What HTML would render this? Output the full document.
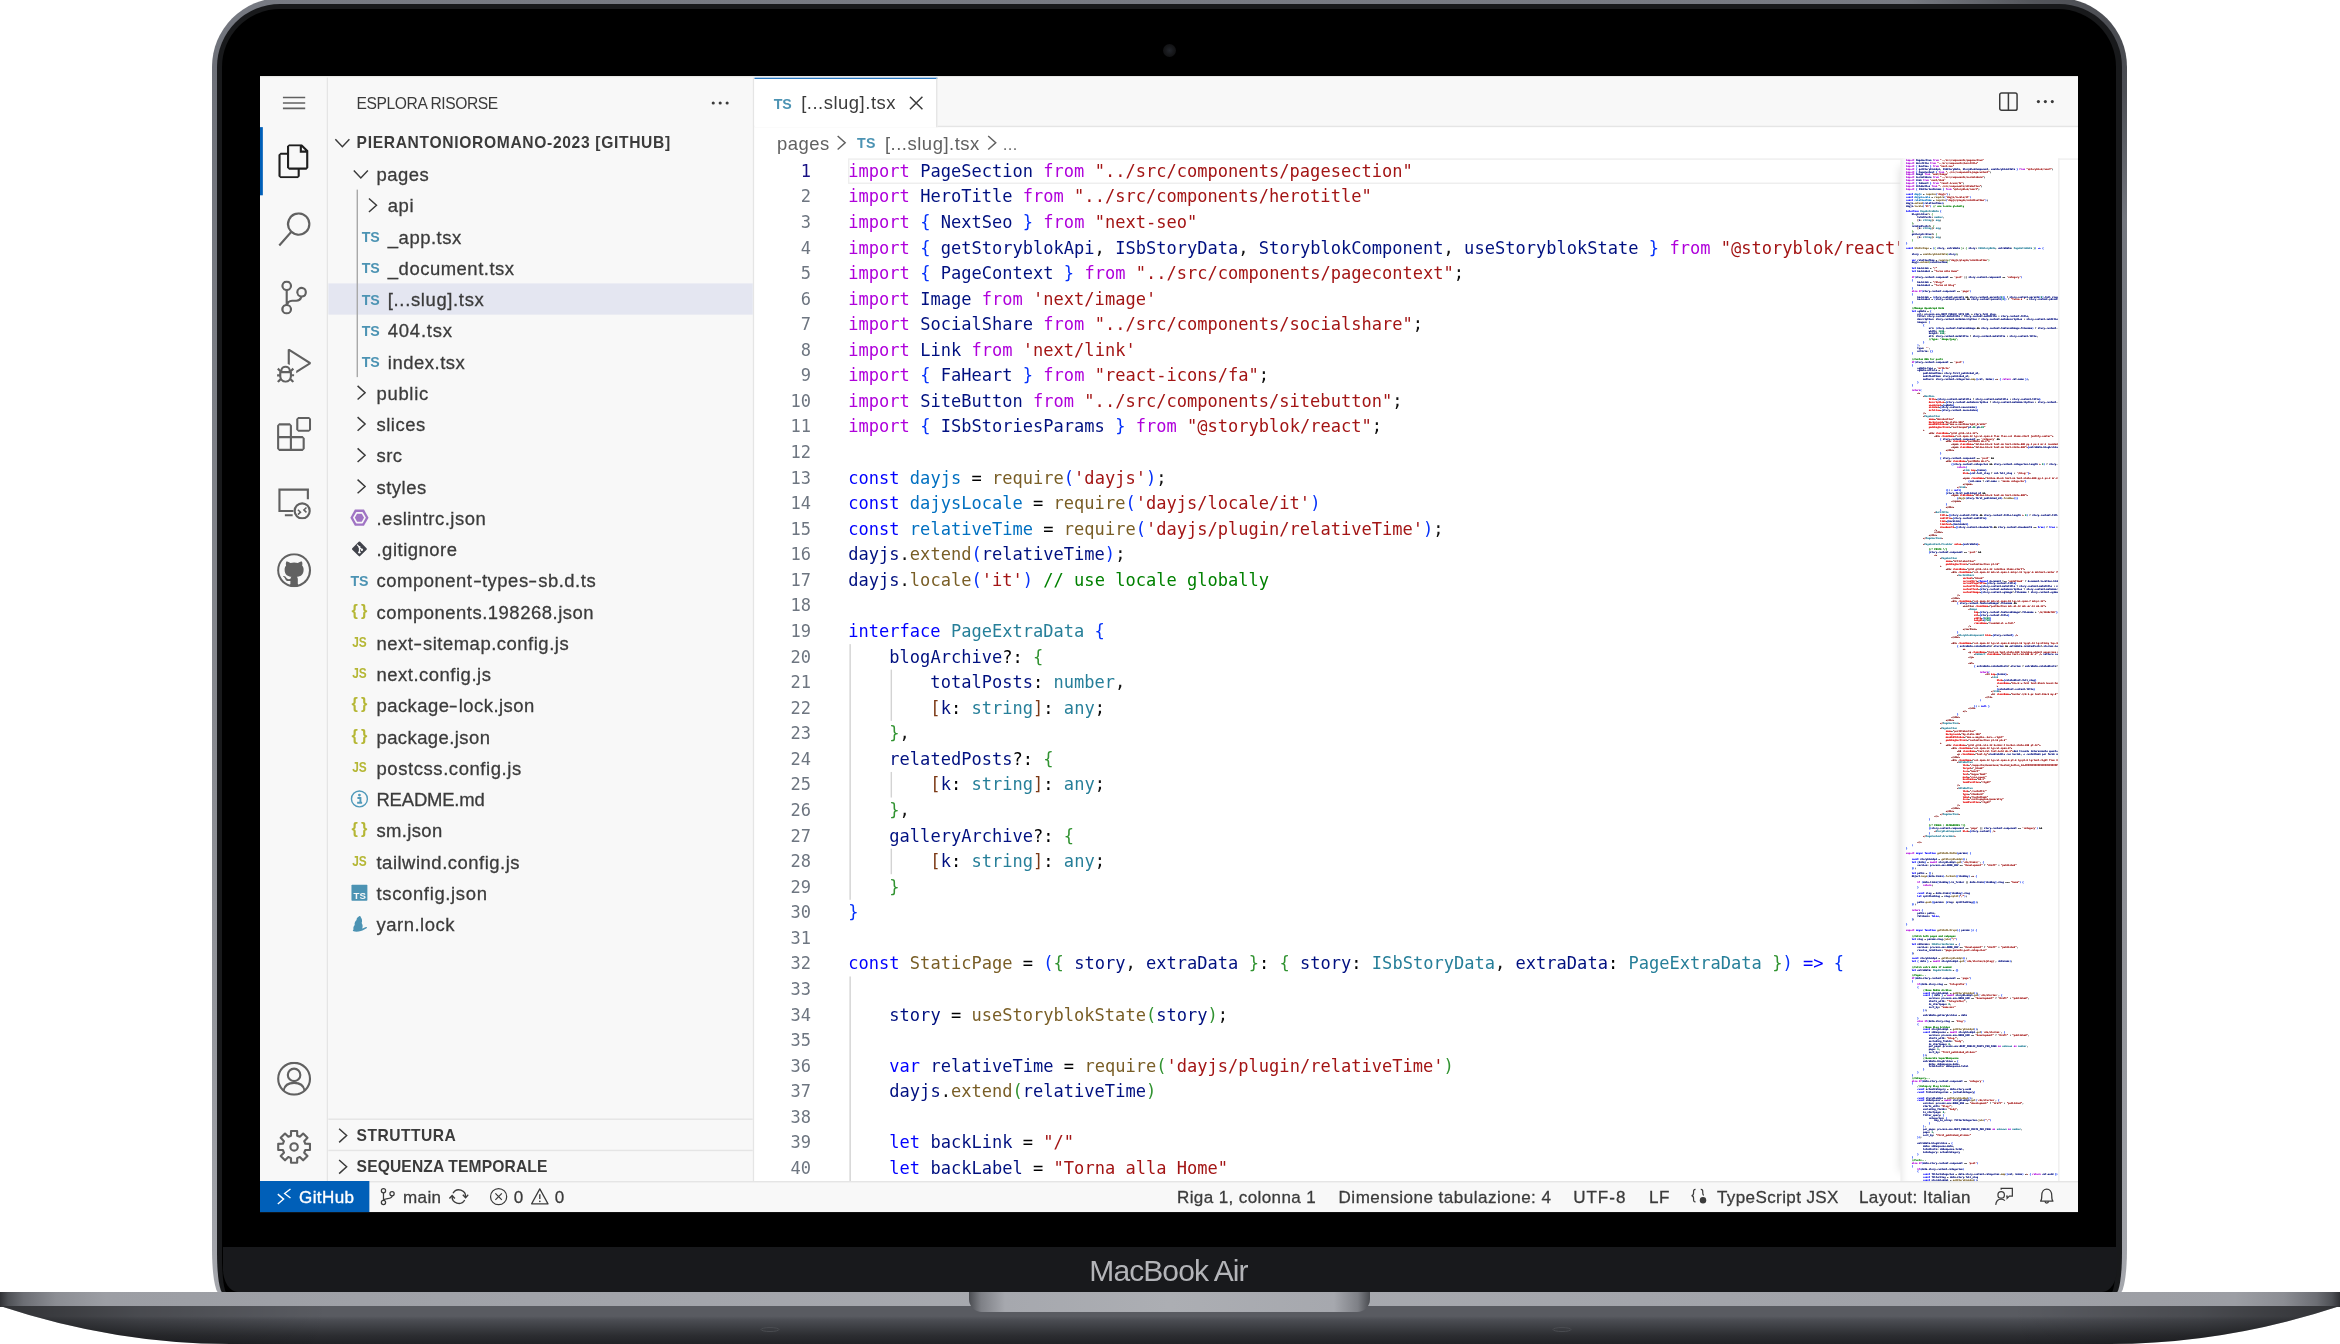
<!DOCTYPE html>
<html lang="it"><head><meta charset="utf-8"><title>[...slug].tsx — pierantonioromano-2023 [GitHub]</title>
<style>
html,body{margin:0;padding:0;background:#fff;}
body{width:2340px;height:1344px;overflow:hidden;position:relative;font-family:"Liberation Sans",sans-serif;}
.abs{position:absolute}
/* ---------- laptop ---------- */
#lid{position:absolute;left:211.7px;top:-2px;width:1915.4px;height:1295px;border-radius:69px 69px 7px 7px / 69px 69px 44px 44px;background:linear-gradient(225deg,rgba(0,0,0,.38) 0,rgba(0,0,0,.3) 3%,rgba(0,0,0,0) 7%),linear-gradient(180deg,#787b83 0%,#6d7078 5%,#7b7e85 30%,#86888e 55%,#95979d 80%,#a5a7ad 100%);}
#lid2{position:absolute;left:5.3px;top:5.5px;right:5.3px;bottom:0;border-radius:63px 63px 6px 6px / 63px 63px 40px 40px;background:#18191b;}
#lid3{position:absolute;left:5.5px;top:5px;right:5.5px;bottom:0;border-radius:58px 58px 5px 5px / 58px 58px 36px 36px;background:#000;}
#chin{position:absolute;left:223px;top:1247px;width:1894px;height:44.5px;background:#18191c;border-radius:0 0 15px 15px / 0 0 23px 23px;}
#mba{position:absolute;left:0;width:2337px;top:1253px;text-align:center;font-size:30px;line-height:36px;color:#b3b4b8;letter-spacing:-0.92px;will-change:transform;}
#cam{position:absolute;left:1162.5px;top:43.5px;width:13px;height:13px;border-radius:50%;background:radial-gradient(circle,#23262c 0,#17181b 45%,#0c0c0d 100%);}
#base{position:absolute;left:0;top:1292px;width:2340px;height:60px;}
#base .strip{position:absolute;left:0;top:0;width:2340px;height:15px;background:linear-gradient(90deg,#303135 0,#4f5156 .35%,#6c6e74 1%,#8b8d93 2.4%,#9c9ea4 4.5%,#a3a5ab 30%,#a9abb0 50%,#a3a5ab 70%,#9c9ea4 95.5%,#8b8d93 97.6%,#6c6e74 99%,#4f5156 99.65%,#303135 100%);}
#base .body{position:absolute;left:0;top:0;width:2340px;height:52px;}
#base .notch{position:absolute;left:969px;top:0;width:401px;height:19.5px;border-radius:0 0 13px 13px;background:linear-gradient(90deg,#4a4c51 0,#7e8086 3%,#a6a8ae 9%,#acaeb3 50%,#a6a8ae 91%,#7e8086 97%,#4a4c51 100%);}
/* ---------- vscode ---------- */
#vs{position:absolute;left:260px;top:76px;width:1280px;height:800px;transform:scale(1.420313);transform-origin:0 0;color:#3b3b3b;font-size:13px;overflow:hidden;will-change:transform;}
#scr{position:absolute;left:260px;top:76px;width:1818px;height:1136px;background:#e8e8e6}
#vs svg{display:block}
#wb{position:absolute;left:0;top:1px;width:1280px;height:777px;background:#f8f8f8}
.act{position:absolute;left:0;top:0;width:48px;height:777px;background:#f8f8f8;border-right:1px solid #e5e5e5;box-sizing:border-box;}
.act .it{position:absolute;left:0;width:48px;height:48px;}
.act .it svg{position:absolute;left:12px;top:12px;}
.act .it.on:before{content:"";position:absolute;left:0;top:0;width:2px;height:48px;background:#005fb8;}
.act .menu{position:absolute;left:0;top:0;width:48px;height:35px;}
.act .menu svg{position:absolute;left:16px;top:10.3px;}
.side{position:absolute;left:48px;top:0;width:300px;height:777px;background:#f8f8f8;border-right:1px solid #e5e5e5;box-sizing:border-box;overflow:hidden;}
.side .title{position:absolute;left:20px;top:0;height:35px;line-height:36px;font-size:11px;letter-spacing:-0.3px;color:#3b3b3b;white-space:pre;}
.side .dots{position:absolute;left:268px;top:10px;}
.side .ph{position:absolute;left:0;width:299px;height:22px;line-height:23px;font-size:11px;font-weight:700;color:#3b3b3b;white-space:pre;}
.side .ph .tw{position:absolute;left:2px;top:3px;}
.side .ph .lb{position:absolute;left:20px;top:0;}
.side .ph.bt{border-top:1px solid #e5e5e5;}
.rows{position:absolute;left:0;top:57px;width:299px;}
.row{position:relative;height:22px;line-height:22px;white-space:pre;}
.row.sel{background:#e4e6f1;}
.row .tw{position:absolute;top:3px;color:#3b3b3b}
.row .fi{position:absolute;top:3px;width:16px;height:16px;}
.row .lb{position:absolute;top:1.4px;letter-spacing:0.36px;color:#3b3b3b;-webkit-text-stroke:.2px #3b3b3b}
.ticon{display:block;font-weight:700;font-size:10px;line-height:16px;letter-spacing:-0.1px;text-align:center;width:16px;}
.hy{display:inline-block;transform:scaleX(1.45);margin:0 1px}
.ticon.ts{color:#4c93b3;line-height:17.2px}.ticon.js{color:#b5b735;transform:scaleX(.84)}.ticon.jsn{color:#b5b735;font-size:11.5px;font-weight:700;letter-spacing:0;line-height:14.4px}
.guide{position:absolute;left:20px;top:79px;width:1px;height:132px;background:#a9a9a9;}
.editor{position:absolute;left:348px;top:0;width:932px;height:777px;background:#fff;overflow:hidden;}
.tabs{position:absolute;left:0;top:0;width:932px;height:35px;background:#f8f8f8;border-bottom:1px solid #e5e5e5;box-sizing:border-box;}
.tab{position:absolute;left:0;top:0;width:129px;height:35px;background:#fff;border-top:1px solid #005fb8;border-right:1px solid #e5e5e5;box-sizing:border-box;}
.tab .fi{position:absolute;left:12px;top:9px;}
.tab .lb{position:absolute;left:33px;top:0;line-height:34px;letter-spacing:0.36px;white-space:pre;color:#3b3b3b}
.tab .x{position:absolute;left:106px;top:9px;}
.tabs .act1{position:absolute;left:875px;top:8.9px;}
.tabs .act2{position:absolute;left:900.8px;top:9.2px;}
.bc{position:absolute;left:0;top:35px;width:932px;height:22px;line-height:24px;color:#616161;white-space:pre;}
.bc span{position:absolute;top:0;letter-spacing:0.36px}
.bc .ch{top:3px;color:#616161}
.bc .fi{top:3px}
.code{position:absolute;left:0;top:57.3px;width:932px;height:720px;font-family:"DejaVu Sans Mono",monospace;font-size:12px;line-height:18px;}
.lns{position:absolute;left:0;top:0;width:40px;text-align:right;color:#6e7681;}
.ln.cur{color:#171184}
.cls{position:absolute;left:66.2px;top:0;width:740px;height:720px;overflow:hidden;color:#3b3b3b;}
.cl{height:18px;white-space:pre;}
.k{color:#AF00DB}.b{color:#0000FF}.v{color:#001080}.c{color:#0070C1}.f{color:#795E26}.t{color:#267F99}.s{color:#A31515}.m{color:#008000}.p{color:#111}.o{color:#000}.b1{color:#0431FA}.b2{color:#319331}.b3{color:#7B3814}.a{color:#E50000}.g{color:#800000}.n{color:#098658}
.curline{position:absolute;left:65.6px;top:-0.2px;width:760px;height:17.8px;border:1.6px solid #eeeeee;box-sizing:border-box;}
.ig{position:absolute;width:1px;background:#d3d3d3;}
.mm{position:absolute;left:806.5px;top:57px;width:111.7px;height:720px;overflow:hidden;background:#fff;box-shadow:-6px 0 6px -6px #ddd;}
.mm:before{content:"";position:absolute;left:0;top:0;width:6px;height:720px;box-shadow:inset 6px 0 6px -6px #ddd;}
.mm pre{position:absolute;left:4.4px;top:-0.2px;margin:0;font-family:"DejaVu Sans Mono",monospace;font-size:1.661px;line-height:2px;font-weight:700;opacity:.95;}
.mm pre i{font-style:normal;text-shadow:0 0 .4px currentColor;}
.sb{position:absolute;left:918px;top:57px;width:14px;height:720px;border-left:1px solid #efefef;border-top:1px solid #efefef;box-sizing:border-box;background:#fff}
.status{position:absolute;left:0;top:778px;width:1280px;height:22px;background:#f8f8f8;border-top:1px solid #e5e5e5;box-sizing:border-box;font-size:12px;line-height:21px;color:#3b3b3b;white-space:pre;}
.status span{position:absolute;top:0.4px;letter-spacing:0.27px;-webkit-text-stroke:.2px #3b3b3b}
.status .ic{top:2.5px}
.status .rem{left:0;top:-1px;width:77px;height:22px;background:#005fb8;}



.status .tx{transform:translateY(0.6px)}

</style></head>
<body>
<div id="lid"><div id="lid2"><div id="lid3"></div></div></div>
<div id="chin"></div>
<div id="cam"></div>
<div id="mba">MacBook Air</div>
<div id="base"><div class="strip"></div><svg class="body" width="2340" height="52" viewBox="0 0 2340 52"><defs><linearGradient id="bg1" x1="0" y1="0" x2="0" y2="1"><stop offset="0.27" stop-color="#595b61"/><stop offset="0.36" stop-color="#4c4e54"/><stop offset="0.55" stop-color="#3d3f44"/><stop offset="0.78" stop-color="#2c2d31"/><stop offset="1" stop-color="#212226"/></linearGradient><linearGradient id="bg2" x1="0" y1="0" x2="1" y2="0"><stop offset="0" stop-color="#000" stop-opacity=".45"/><stop offset="0.06" stop-color="#000" stop-opacity=".18"/><stop offset="0.14" stop-color="#000" stop-opacity="0"/><stop offset="0.86" stop-color="#000" stop-opacity="0"/><stop offset="0.94" stop-color="#000" stop-opacity=".18"/><stop offset="1" stop-color="#000" stop-opacity=".45"/></linearGradient></defs><path d="M0 14 Q115 52 230 52 L2110 52 Q2225 52 2340 14 Z" fill="url(#bg1)"/><path d="M0 14 Q115 52 230 52 L2110 52 Q2225 52 2340 14 Z" fill="url(#bg2)"/><ellipse cx="770" cy="37.5" rx="9" ry="2" fill="none" stroke="#4a4c51" stroke-width="1"/><ellipse cx="1562" cy="37.5" rx="9" ry="2" fill="none" stroke="#4a4c51" stroke-width="1"/></svg><div class="notch"></div></div>
<div id="scr"></div>
<div id="vs">
 <div id="wb">
 <div class="act">
  <div class="menu"><svg width="16" height="16" viewBox="0 0 16 16" ><path d="M0 4.2 H16 M0 8 H16 M0 11.8 H16" stroke="#616161" stroke-width="1.1"/></svg></div>
  <div class="it on" style="top:35px"><svg width="24" height="24" viewBox="0 0 24 24" ><path fill="#1f1f1f" d="M17.5 0h-9L7 1.5V6H2.5L1 7.5v15.07L2.5 24h12.07L16 22.57V18h4.7l1.3-1.43V4.5L17.5 0zm0 2.12l2.38 2.38H17.5V2.12zm-3 20.38h-12v-15H7v9.07L8.5 18h6v4.5zm6-6h-12v-15H16V6h4.5v10.5z"/></svg></div>
  <div class="it" style="top:83px"><svg width="24" height="24" viewBox="0 0 24 24" ><path fill="#616161" d="M15.25 0a8.25 8.25 0 0 0-6.18 13.72L1 22.88l1.12 1 8.05-9.12A8.251 8.251 0 1 0 15.25.01V0zm0 15a6.75 6.75 0 1 1 0-13.5 6.75 6.75 0 0 1 0 13.5z"/></svg></div>
  <div class="it" style="top:131px"><svg width="24" height="24" viewBox="0 0 24 24" ><path fill="#616161" d="M21.007 8.222A3.738 3.738 0 0 0 15.045 5.2a3.737 3.737 0 0 0 1.156 6.583 2.988 2.988 0 0 1-2.668 1.67h-2.99a4.456 4.456 0 0 0-2.989 1.165V7.4a3.737 3.737 0 1 0-1.494 0v9.117a3.776 3.776 0 1 0 1.816.099 2.99 2.99 0 0 1 2.668-1.667h2.99a4.484 4.484 0 0 0 4.223-3.039 3.736 3.736 0 0 0 3.25-3.687zM4.565 3.738a2.242 2.242 0 1 1 4.484 0 2.242 2.242 0 0 1-4.484 0zm4.484 16.441a2.242 2.242 0 1 1-4.484 0 2.242 2.242 0 0 1 4.484 0zm8.221-9.715a2.242 2.242 0 1 1 0-4.485 2.242 2.242 0 0 1 0 4.485z"/></svg></div>
  <div class="it" style="top:179px"><svg width="24" height="24" viewBox="0 0 24 24" ><path fill="#616161" d="M10.94 13.5l-1.32 1.32a3.73 3.73 0 0 0-7.24 0L1.06 13.5 0 14.56l1.72 1.72-.22.22V18H0v1.5h1.5v.08c.077.489.214.966.41 1.42L0 22.94 1.06 24l1.65-1.65A4.308 4.308 0 0 0 6 24a4.31 4.31 0 0 0 3.29-1.65L10.94 24 12 22.94 10.09 21c.198-.464.336-.951.41-1.45v-.1H12V18h-1.5v-1.5l-.22-.22L12 14.56l-1.06-1.06zM6 13.5a2.25 2.25 0 0 1 2.25 2.25h-4.5A2.25 2.25 0 0 1 6 13.5zm3 6a3.33 3.33 0 0 1-3 3 3.33 3.33 0 0 1-3-3v-2.25h6v2.25zm14.76-9.9v1.26L13.5 17.37V15.6l8.5-5.37L9 2v9.46a5.07 5.07 0 0 0-1.5-.72V.63L8.64 0l15.12 9.6z"/></svg></div>
  <div class="it" style="top:227px"><svg width="24" height="24" viewBox="0 0 24 24" ><path fill="#616161" d="M13.5 1.5L15 0h7.5L24 1.5V9l-1.5 1.5H15L13.5 9V1.5zm1.5 0V9h7.5V1.5H15zM0 15V6l1.5-1.5H9L10.5 6v7.5H18l1.5 1.5v7.5L18 24H1.5L0 22.5V15zm9-1.5V6H1.5v7.5H9zM9 15H1.5v7.5H9V15zm1.5 7.5H18V15h-7.5v7.5z"/></svg></div>
  <div class="it" style="top:275px"><svg width="24" height="24" viewBox="0 0 24 24" ><path d="M21.7 10 V3.2 H1.7 V18.3 H11.5 M5.5 21.3 H11" fill="none" stroke="#616161" stroke-width="1.5"/><circle cx="17.7" cy="18.2" r="5.3" fill="none" stroke="#616161" stroke-width="1.5"/><path d="M14.7 17.4 L16.5 19.1 L14.7 20.8 M20.7 15.8 L18.9 17.5 L20.7 19.2" fill="none" stroke="#616161" stroke-width="1.1"/></svg></div>
  <div class="it" style="top:323px"><svg width="24" height="24" viewBox="0 0 16 16" ><circle cx="8" cy="8" r="7.95" fill="#616161"/><g transform="translate(8 8) scale(0.875) translate(-8 -8)"><path fill="#f8f8f8" d="M8 0C3.58 0 0 3.58 0 8c0 3.54 2.29 6.53 5.47 7.59.4.07.55-.17.55-.38 0-.19-.01-.82-.01-1.49-2.01.37-2.53-.49-2.69-.94-.09-.23-.48-.94-.82-1.13-.28-.15-.68-.52-.01-.53.63-.01 1.08.58 1.23.82.72 1.21 1.87.87 2.33.66.07-.52.28-.87.51-1.07-1.78-.2-3.64-.89-3.64-3.95 0-.87.31-1.59.82-2.15-.08-.2-.36-1.02.08-2.12 0 0 .67-.21 2.2.82.64-.18 1.32-.27 2-.27.68 0 1.36.09 2 .27 1.53-1.04 2.2-.82 2.2-.82.44 1.1.16 1.92.08 2.12.51.56.82 1.27.82 2.15 0 3.07-1.87 3.75-3.65 3.95.29.25.54.73.54 1.48 0 1.07-.01 1.93-.01 2.2 0 .21.15.46.55.38A8.013 8.013 0 0 0 16 8c0-4.42-3.58-8-8-8z"/></g></svg></div>
  <div class="it" style="top:681px"><svg width="24" height="24" viewBox="0 0 24 24" ><circle cx="12" cy="12" r="11.2" fill="none" stroke="#616161" stroke-width="1.5"/><circle cx="12" cy="9.3" r="4.4" fill="none" stroke="#616161" stroke-width="1.5"/><path d="M4.6 20.2 C5.4 16.4 8.4 14.9 12 14.9 C15.6 14.9 18.6 16.4 19.4 20.2" fill="none" stroke="#616161" stroke-width="1.5"/></svg></div>
  <div class="it" style="top:729px"><svg width="24" height="24" viewBox="0 0 24 24" ><path d="M9.81 4.10 L9.85 0.81 L14.15 0.81 L14.19 4.10 L16.04 4.87 L18.39 2.56 L21.44 5.61 L19.13 7.96 L19.90 9.81 L23.19 9.85 L23.19 14.15 L19.90 14.19 L19.13 16.04 L21.44 18.39 L18.39 21.44 L16.04 19.13 L14.19 19.90 L14.15 23.19 L9.85 23.19 L9.81 19.90 L7.96 19.13 L5.61 21.44 L2.56 18.39 L4.87 16.04 L4.10 14.19 L0.81 14.15 L0.81 9.85 L4.10 9.81 L4.87 7.96 L2.56 5.61 L5.61 2.56 L7.96 4.87Z" fill="none" stroke="#616161" stroke-width="1.5" stroke-linejoin="round"/><circle cx="12" cy="12" r="2.6" fill="none" stroke="#616161" stroke-width="1.5"/></svg></div>
 </div>
 <div class="side">
  <div class="title">ESPLORA RISORSE</div>
  <div class="dots"><svg width="16" height="16" viewBox="0 0 16 16" ><circle cx="3.1" cy="8" r="1.1" fill="#3b3b3b"/><circle cx="8" cy="8" r="1.1" fill="#3b3b3b"/><circle cx="12.9" cy="8" r="1.1" fill="#3b3b3b"/></svg></div>
  <div class="ph" style="top:35px"><span class="tw"><svg width="16" height="16" viewBox="0 0 16 16" ><path d="M3.05 5.6 L8 10.8 L12.95 5.6" fill="none" stroke="currentColor" stroke-width="1.05"/></svg></span><span class="lb" style="letter-spacing:.46px">PIERANTONIOROMANO-2023 [GITHUB]</span></div>
  <div class="rows">
<div class="row"><span class="tw" style="left:15px"><svg width="16" height="16" viewBox="0 0 16 16" ><path d="M3.05 5.6 L8 10.8 L12.95 5.6" fill="none" stroke="currentColor" stroke-width="1.05"/></svg></span><span class="lb" style="left:34px">pages</span></div>
<div class="row"><span class="tw" style="left:23px"><svg width="16" height="16" viewBox="0 0 16 16" ><path d="M5.7 3.2 L11 8 L5.7 12.8" fill="none" stroke="currentColor" stroke-width="1.05"/></svg></span><span class="lb" style="left:42px">api</span></div>
<div class="row"><span class="fi" style="left:22px"><span class="ticon ts">TS</span></span><span class="lb" style="left:42px">_app.tsx</span></div>
<div class="row"><span class="fi" style="left:22px"><span class="ticon ts">TS</span></span><span class="lb" style="left:42px">_document.tsx</span></div>
<div class="row sel"><span class="fi" style="left:22px"><span class="ticon ts">TS</span></span><span class="lb" style="left:42px;letter-spacing:0.45px">[...slug].tsx</span></div>
<div class="row"><span class="fi" style="left:22px"><span class="ticon ts">TS</span></span><span class="lb" style="left:42px;letter-spacing:0.53px">404.tsx</span></div>
<div class="row"><span class="fi" style="left:22px"><span class="ticon ts">TS</span></span><span class="lb" style="left:42px">index.tsx</span></div>
<div class="row"><span class="tw" style="left:15px"><svg width="16" height="16" viewBox="0 0 16 16" ><path d="M5.7 3.2 L11 8 L5.7 12.8" fill="none" stroke="currentColor" stroke-width="1.05"/></svg></span><span class="lb" style="left:34px;letter-spacing:0.49px">public</span></div>
<div class="row"><span class="tw" style="left:15px"><svg width="16" height="16" viewBox="0 0 16 16" ><path d="M5.7 3.2 L11 8 L5.7 12.8" fill="none" stroke="currentColor" stroke-width="1.05"/></svg></span><span class="lb" style="left:34px">slices</span></div>
<div class="row"><span class="tw" style="left:15px"><svg width="16" height="16" viewBox="0 0 16 16" ><path d="M5.7 3.2 L11 8 L5.7 12.8" fill="none" stroke="currentColor" stroke-width="1.05"/></svg></span><span class="lb" style="left:34px">src</span></div>
<div class="row"><span class="tw" style="left:15px"><svg width="16" height="16" viewBox="0 0 16 16" ><path d="M5.7 3.2 L11 8 L5.7 12.8" fill="none" stroke="currentColor" stroke-width="1.05"/></svg></span><span class="lb" style="left:34px">styles</span></div>
<div class="row"><span class="fi" style="left:14px"><svg width="16" height="16" viewBox="0 0 16 16" ><path d="M1.6 8 L4.8 2.3 H11.2 L14.4 8 L11.2 13.7 H4.8 Z" fill="#a074c4"/><path d="M4.1 8 L6.05 4.55 H9.95 L11.9 8 L9.95 11.45 H6.05 Z" fill="none" stroke="#f8f8f8" stroke-width="1.15" stroke-linejoin="round"/></svg></span><span class="lb" style="left:34px">.eslintrc.json</span></div>
<div class="row"><span class="fi" style="left:14px"><svg width="16" height="16" viewBox="0 0 16 16" ><rect x="4.1" y="4.1" width="7.8" height="7.8" rx="0.7" transform="rotate(45 8 8)" fill="#41434b"/><path d="M6.3 4.9 L8 6.6 V10.4 M8.1 7.0 L9.6 8.5" stroke="#f8f8f8" stroke-width="0.8" fill="none"/><circle cx="8" cy="10.4" r="0.85" fill="#f8f8f8"/><circle cx="9.7" cy="8.6" r="0.85" fill="#f8f8f8"/><circle cx="8" cy="6.7" r="0.8" fill="#f8f8f8"/></svg></span><span class="lb" style="left:34px">.gitignore</span></div>
<div class="row"><span class="fi" style="left:14px"><span class="ticon ts">TS</span></span><span class="lb" style="left:34px">component<span class="hy">-</span>types<span class="hy">-</span>sb.d.ts</span></div>
<div class="row"><span class="fi" style="left:14px"><span class="ticon jsn">{&#8201;}</span></span><span class="lb" style="left:34px">components.198268.json</span></div>
<div class="row"><span class="fi" style="left:14px"><span class="ticon js">JS</span></span><span class="lb" style="left:34px">next<span class="hy">-</span>sitemap.config.js</span></div>
<div class="row"><span class="fi" style="left:14px"><span class="ticon js">JS</span></span><span class="lb" style="left:34px">next.config.js</span></div>
<div class="row"><span class="fi" style="left:14px"><span class="ticon jsn">{&#8201;}</span></span><span class="lb" style="left:34px;letter-spacing:0.31px">package<span class="hy">-</span>lock.json</span></div>
<div class="row"><span class="fi" style="left:14px"><span class="ticon jsn">{&#8201;}</span></span><span class="lb" style="left:34px;letter-spacing:0.30px">package.json</span></div>
<div class="row"><span class="fi" style="left:14px"><span class="ticon js">JS</span></span><span class="lb" style="left:34px;letter-spacing:0.41px">postcss.config.js</span></div>
<div class="row"><span class="fi" style="left:14px"><svg width="16" height="16" viewBox="0 0 16 16" ><circle cx="8" cy="8" r="5.6" fill="none" stroke="#519aba" stroke-width="1"/><circle cx="8" cy="5.3" r="1" fill="#519aba"/><path d="M6.6 7.3 H8.7 V10.7 M6.4 10.7 H9.9" stroke="#519aba" stroke-width="1.35" fill="none"/></svg></span><span class="lb" style="left:34px;letter-spacing:-0.13px">README.md</span></div>
<div class="row"><span class="fi" style="left:14px"><span class="ticon jsn">{&#8201;}</span></span><span class="lb" style="left:34px;letter-spacing:0.25px">sm.json</span></div>
<div class="row"><span class="fi" style="left:14px"><span class="ticon js">JS</span></span><span class="lb" style="left:34px">tailwind.config.js</span></div>
<div class="row"><span class="fi" style="left:14px"><svg width="16" height="16" viewBox="0 0 16 16" ><rect x="2.4" y="2.5" width="11.2" height="11.1" rx="0.5" fill="#4c93b3"/><text x="8.2" y="12.6" font-family="Liberation Sans, sans-serif" font-weight="700" font-size="6.8" text-anchor="middle" fill="#f8f8f8">TS</text></svg></span><span class="lb" style="left:34px;letter-spacing:0.46px">tsconfig.json</span></div>
<div class="row"><span class="fi" style="left:14px"><svg width="16" height="16" viewBox="0 0 16 16" ><path d="M7.2 3.1 C7.9 2.2 8.8 2.3 9 3.3 C10 4.6 10 6 9.6 7.3 C10.4 8.6 10.5 10 9.9 11.2 C10.9 11.2 12 10.4 12.8 10.2 C13.4 10.1 13.5 10.8 13 11.1 C11.8 11.8 10.6 12.8 9 13 C7.4 13.5 5.2 13.6 3.9 13.2 C3.1 12.9 3.3 12.2 3.9 12 C3.5 10.8 3.9 9.6 4.7 8.8 C4.3 7.4 5 6 6 5.2 C5.9 4.3 6.4 3.5 7.2 3.1 Z" fill="#4c93b3"/></svg></span><span class="lb" style="left:34px">yarn.lock</span></div>
  </div>
  <div class="guide"></div>
  <div class="ph bt" style="top:733px"><span class="tw"><svg width="16" height="16" viewBox="0 0 16 16" ><path d="M5.7 3.2 L11 8 L5.7 12.8" fill="none" stroke="currentColor" stroke-width="1.05"/></svg></span><span class="lb" style="letter-spacing:.32px">STRUTTURA</span></div>
  <div class="ph bt" style="top:755px"><span class="tw"><svg width="16" height="16" viewBox="0 0 16 16" ><path d="M5.7 3.2 L11 8 L5.7 12.8" fill="none" stroke="currentColor" stroke-width="1.05"/></svg></span><span class="lb" style="letter-spacing:.09px">SEQUENZA TEMPORALE</span></div>
 </div>
 <div class="editor">
  <div class="tabs">
   <div class="tab"><span class="fi"><span class="ticon ts">TS</span></span><span class="lb">[...slug].tsx</span><span class="x"><svg width="16" height="16" viewBox="0 0 16 16" ><path d="M3.6 3.6 L12.4 12.4 M12.4 3.6 L3.6 12.4" stroke="#3b3b3b" stroke-width="1.05"/></svg></span></div>
   <div class="act1"><svg width="16" height="16" viewBox="0 0 16 16" ><rect x="1.9" y="1.9" width="12.2" height="12.2" rx="1.3" fill="none" stroke="#3b3b3b" stroke-width="1.05"/><path d="M8 1.9 V14.1" stroke="#3b3b3b" stroke-width="1.05"/></svg></div><div class="act2"><svg width="16" height="16" viewBox="0 0 16 16" ><circle cx="3.1" cy="8" r="1.1" fill="#3b3b3b"/><circle cx="8" cy="8" r="1.1" fill="#3b3b3b"/><circle cx="12.9" cy="8" r="1.1" fill="#3b3b3b"/></svg></div>
  </div>
  <div class="bc"><span style="left:16px">pages</span><span class="ch" style="left:53px"><svg width="16" height="16" viewBox="0 0 16 16" ><path d="M5.7 3.2 L11 8 L5.7 12.8" fill="none" stroke="currentColor" stroke-width="1.05"/></svg></span><span class="fi" style="left:71px"><span class="ticon ts">TS</span></span><span style="left:92px">[...slug].tsx</span><span class="ch" style="left:159px"><svg width="16" height="16" viewBox="0 0 16 16" ><path d="M5.7 3.2 L11 8 L5.7 12.8" fill="none" stroke="currentColor" stroke-width="1.05"/></svg></span><span style="left:174.6px;font-size:11px;letter-spacing:0">…</span></div>
  <div class="code">
   <div class="curline"></div>
   <div class="lns">
<div class="ln cur">1</div>
<div class="ln">2</div>
<div class="ln">3</div>
<div class="ln">4</div>
<div class="ln">5</div>
<div class="ln">6</div>
<div class="ln">7</div>
<div class="ln">8</div>
<div class="ln">9</div>
<div class="ln">10</div>
<div class="ln">11</div>
<div class="ln">12</div>
<div class="ln">13</div>
<div class="ln">14</div>
<div class="ln">15</div>
<div class="ln">16</div>
<div class="ln">17</div>
<div class="ln">18</div>
<div class="ln">19</div>
<div class="ln">20</div>
<div class="ln">21</div>
<div class="ln">22</div>
<div class="ln">23</div>
<div class="ln">24</div>
<div class="ln">25</div>
<div class="ln">26</div>
<div class="ln">27</div>
<div class="ln">28</div>
<div class="ln">29</div>
<div class="ln">30</div>
<div class="ln">31</div>
<div class="ln">32</div>
<div class="ln">33</div>
<div class="ln">34</div>
<div class="ln">35</div>
<div class="ln">36</div>
<div class="ln">37</div>
<div class="ln">38</div>
<div class="ln">39</div>
<div class="ln">40</div>
   </div>
   <div class="cls">
<div class="cl"><span class="k">import</span> <span class="v">PageSection</span> <span class="k">from</span> <span class="s">"../src/components/pagesection"</span></div>
<div class="cl"><span class="k">import</span> <span class="v">HeroTitle</span> <span class="k">from</span> <span class="s">"../src/components/herotitle"</span></div>
<div class="cl"><span class="k">import</span> <span class="b1">{</span> <span class="v">NextSeo</span> <span class="b1">}</span> <span class="k">from</span> <span class="s">"next-seo"</span></div>
<div class="cl"><span class="k">import</span> <span class="b1">{</span> <span class="v">getStoryblokApi</span><span class="p">,</span> <span class="v">ISbStoryData</span><span class="p">,</span> <span class="v">StoryblokComponent</span><span class="p">,</span> <span class="v">useStoryblokState</span> <span class="b1">}</span> <span class="k">from</span> <span class="s">"@storyblok/react"</span><span class="p">;</span></div>
<div class="cl"><span class="k">import</span> <span class="b1">{</span> <span class="v">PageContext</span> <span class="b1">}</span> <span class="k">from</span> <span class="s">"../src/components/pagecontext"</span><span class="p">;</span></div>
<div class="cl"><span class="k">import</span> <span class="v">Image</span> <span class="k">from</span> <span class="s">'next/image'</span></div>
<div class="cl"><span class="k">import</span> <span class="v">SocialShare</span> <span class="k">from</span> <span class="s">"../src/components/socialshare"</span><span class="p">;</span></div>
<div class="cl"><span class="k">import</span> <span class="v">Link</span> <span class="k">from</span> <span class="s">'next/link'</span></div>
<div class="cl"><span class="k">import</span> <span class="b1">{</span> <span class="v">FaHeart</span> <span class="b1">}</span> <span class="k">from</span> <span class="s">"react-icons/fa"</span><span class="p">;</span></div>
<div class="cl"><span class="k">import</span> <span class="v">SiteButton</span> <span class="k">from</span> <span class="s">"../src/components/sitebutton"</span><span class="p">;</span></div>
<div class="cl"><span class="k">import</span> <span class="b1">{</span> <span class="v">ISbStoriesParams</span> <span class="b1">}</span> <span class="k">from</span> <span class="s">"@storyblok/react"</span><span class="p">;</span></div>
<div class="cl"></div>
<div class="cl"><span class="b">const</span> <span class="c">dayjs</span> <span class="o">=</span> <span class="f">require</span><span class="b1">(</span><span class="s">'dayjs'</span><span class="b1">)</span><span class="p">;</span></div>
<div class="cl"><span class="b">const</span> <span class="c">dajysLocale</span> <span class="o">=</span> <span class="f">require</span><span class="b1">(</span><span class="s">'dayjs/locale/it'</span><span class="b1">)</span></div>
<div class="cl"><span class="b">const</span> <span class="c">relativeTime</span> <span class="o">=</span> <span class="f">require</span><span class="b1">(</span><span class="s">'dayjs/plugin/relativeTime'</span><span class="b1">)</span><span class="p">;</span></div>
<div class="cl"><span class="v">dayjs</span><span class="p">.</span><span class="f">extend</span><span class="b1">(</span><span class="v">relativeTime</span><span class="b1">)</span><span class="p">;</span></div>
<div class="cl"><span class="v">dayjs</span><span class="p">.</span><span class="f">locale</span><span class="b1">(</span><span class="s">'it'</span><span class="b1">)</span> <span class="m">// use locale globally</span></div>
<div class="cl"></div>
<div class="cl"><span class="b">interface</span> <span class="t">PageExtraData</span> <span class="b1">{</span></div>
<div class="cl">    <span class="v">blogArchive</span><span class="o">?:</span> <span class="b2">{</span></div>
<div class="cl">        <span class="v">totalPosts</span><span class="o">:</span> <span class="t">number</span><span class="p">,</span></div>
<div class="cl">        <span class="b3">[</span><span class="v">k</span><span class="o">:</span> <span class="t">string</span><span class="b3">]</span><span class="o">:</span> <span class="t">any</span><span class="p">;</span></div>
<div class="cl">    <span class="b2">}</span><span class="p">,</span></div>
<div class="cl">    <span class="v">relatedPosts</span><span class="o">?:</span> <span class="b2">{</span></div>
<div class="cl">        <span class="b3">[</span><span class="v">k</span><span class="o">:</span> <span class="t">string</span><span class="b3">]</span><span class="o">:</span> <span class="t">any</span><span class="p">;</span></div>
<div class="cl">    <span class="b2">}</span><span class="p">,</span></div>
<div class="cl">    <span class="v">galleryArchive</span><span class="o">?:</span> <span class="b2">{</span></div>
<div class="cl">        <span class="b3">[</span><span class="v">k</span><span class="o">:</span> <span class="t">string</span><span class="b3">]</span><span class="o">:</span> <span class="t">any</span><span class="p">;</span></div>
<div class="cl">    <span class="b2">}</span></div>
<div class="cl"><span class="b1">}</span></div>
<div class="cl"></div>
<div class="cl"><span class="b">const</span> <span class="f">StaticPage</span> <span class="o">=</span> <span class="b1">(</span><span class="b2">{</span> <span class="v">story</span><span class="p">,</span> <span class="v">extraData</span> <span class="b2">}</span><span class="o">:</span> <span class="b2">{</span> <span class="v">story</span><span class="o">:</span> <span class="t">ISbStoryData</span><span class="p">,</span> <span class="v">extraData</span><span class="o">:</span> <span class="t">PageExtraData</span> <span class="b2">}</span><span class="b1">)</span> <span class="b">=&gt;</span> <span class="b1">{</span></div>
<div class="cl"></div>
<div class="cl">    <span class="v">story</span> <span class="o">=</span> <span class="f">useStoryblokState</span><span class="b2">(</span><span class="v">story</span><span class="b2">)</span><span class="p">;</span></div>
<div class="cl"></div>
<div class="cl">    <span class="b">var</span> <span class="v">relativeTime</span> <span class="o">=</span> <span class="f">require</span><span class="b2">(</span><span class="s">'dayjs/plugin/relativeTime'</span><span class="b2">)</span></div>
<div class="cl">    <span class="v">dayjs</span><span class="p">.</span><span class="f">extend</span><span class="b2">(</span><span class="v">relativeTime</span><span class="b2">)</span></div>
<div class="cl"></div>
<div class="cl">    <span class="b">let</span> <span class="v">backLink</span> <span class="o">=</span> <span class="s">"/"</span></div>
<div class="cl">    <span class="b">let</span> <span class="v">backLabel</span> <span class="o">=</span> <span class="s">"Torna alla Home"</span></div>
   </div>
   <div class="ig" style="left:66.6px;top:342px;height:180px"></div>
   <div class="ig" style="left:95.5px;top:360px;height:36px"></div>
   <div class="ig" style="left:95.5px;top:432px;height:18px"></div>
   <div class="ig" style="left:95.5px;top:486px;height:18px"></div>
   <div class="ig" style="left:66.6px;top:576px;height:145px"></div>
  </div>
  <div class="mm"><pre><i class="k">import </i><i class="v">PageSection </i><i class="k">from </i><i class="s">"../src/components/pagesection"</i>
<i class="k">import </i><i class="v">HeroTitle </i><i class="k">from </i><i class="s">"../src/components/herotitle"</i>
<i class="k">import </i><i class="b1">{ </i><i class="v">NextSeo </i><i class="b1">} </i><i class="k">from </i><i class="s">"next-seo"</i>
<i class="k">import </i><i class="b1">{ </i><i class="v">getStoryblokApi</i><i class="p">, </i><i class="v">ISbStoryData</i><i class="p">, </i><i class="v">StoryblokComponent</i><i class="p">, </i><i class="v">useStoryblokState </i><i class="b1">} </i><i class="k">from </i><i class="s">"@storyblok/react"</i><i class="p">;</i>
<i class="k">import </i><i class="b1">{ </i><i class="v">PageContext </i><i class="b1">} </i><i class="k">from </i><i class="s">"../src/components/pagecontext"</i><i class="p">;</i>
<i class="k">import </i><i class="v">Image </i><i class="k">from </i><i class="s">'next/image'</i>
<i class="k">import </i><i class="v">SocialShare </i><i class="k">from </i><i class="s">"../src/components/socialshare"</i><i class="p">;</i>
<i class="k">import </i><i class="v">Link </i><i class="k">from </i><i class="s">'next/link'</i>
<i class="k">import </i><i class="b1">{ </i><i class="v">FaHeart </i><i class="b1">} </i><i class="k">from </i><i class="s">"react-icons/fa"</i><i class="p">;</i>
<i class="k">import </i><i class="v">SiteButton </i><i class="k">from </i><i class="s">"../src/components/sitebutton"</i><i class="p">;</i>
<i class="k">import </i><i class="b1">{ </i><i class="v">ISbStoriesParams </i><i class="b1">} </i><i class="k">from </i><i class="s">"@storyblok/react"</i><i class="p">;</i>

<i class="b">const </i><i class="c">dayjs </i><i class="o">= </i><i class="f">require</i><i class="b1">(</i><i class="s">'dayjs'</i><i class="b1">)</i><i class="p">;</i>
<i class="b">const </i><i class="c">dajysLocale </i><i class="o">= </i><i class="f">require</i><i class="b1">(</i><i class="s">'dayjs/locale/it'</i><i class="b1">)</i>
<i class="b">const </i><i class="c">relativeTime </i><i class="o">= </i><i class="f">require</i><i class="b1">(</i><i class="s">'dayjs/plugin/relativeTime'</i><i class="b1">)</i><i class="p">;</i>
<i class="v">dayjs</i><i class="p">.</i><i class="f">extend</i><i class="b1">(</i><i class="v">relativeTime</i><i class="b1">)</i><i class="p">;</i>
<i class="v">dayjs</i><i class="p">.</i><i class="f">locale</i><i class="b1">(</i><i class="s">'it'</i><i class="b1">) </i><i class="m">// use locale globally</i>

<i class="b">interface </i><i class="t">PageExtraData </i><i class="b1">{</i>
<i class="v">    blogArchive</i><i class="o">?: </i><i class="b2">{</i>
<i class="v">        totalPosts</i><i class="o">: </i><i class="t">number</i><i class="p">,</i>
<i class="b3">        [</i><i class="v">k</i><i class="o">: </i><i class="t">string</i><i class="b3">]</i><i class="o">: </i><i class="t">any</i><i class="p">;</i>
<i class="b2">    }</i><i class="p">,</i>
<i class="v">    relatedPosts</i><i class="o">?: </i><i class="b2">{</i>
<i class="b3">        [</i><i class="v">k</i><i class="o">: </i><i class="t">string</i><i class="b3">]</i><i class="o">: </i><i class="t">any</i><i class="p">;</i>
<i class="b2">    }</i><i class="p">,</i>
<i class="v">    galleryArchive</i><i class="o">?: </i><i class="b2">{</i>
<i class="b3">        [</i><i class="v">k</i><i class="o">: </i><i class="t">string</i><i class="b3">]</i><i class="o">: </i><i class="t">any</i><i class="p">;</i>
<i class="b2">    }</i>
<i class="b1">}</i>

<i class="b">const </i><i class="f">StaticPage </i><i class="o">= </i><i class="b1">(</i><i class="b2">{ </i><i class="v">story</i><i class="p">, </i><i class="v">extraData </i><i class="b2">}</i><i class="o">: </i><i class="b2">{ </i><i class="v">story</i><i class="o">: </i><i class="t">ISbStoryData</i><i class="p">, </i><i class="v">extraData</i><i class="o">: </i><i class="t">PageExtraData </i><i class="b2">}</i><i class="b1">) </i><i class="b">=&gt; </i><i class="b1">{</i>

<i class="v">    story </i><i class="o">= </i><i class="f">useStoryblokState</i><i class="b2">(</i><i class="v">story</i><i class="b2">)</i><i class="p">;</i>

<i class="b">    var </i><i class="v">relativeTime </i><i class="o">= </i><i class="f">require</i><i class="b2">(</i><i class="s">'dayjs/plugin/relativeTime'</i><i class="b2">)</i>
<i class="v">    dayjs</i><i class="p">.</i><i class="f">extend</i><i class="b2">(</i><i class="v">relativeTime</i><i class="b2">)</i>

<i class="b">    let </i><i class="v">backLink </i><i class="o">= </i><i class="s">"/"</i>
<i class="b">    let </i><i class="v">backLabel </i><i class="o">= </i><i class="s">"Torna alla Home"</i>

<i class="k">    if</i><i class="b1">(</i><i class="v">story</i><i class="p">.</i><i class="v">content</i><i class="p">.</i><i class="v">component </i><i class="p">== </i><i class="s">'post' </i><i class="p">|| </i><i class="v">story</i><i class="p">.</i><i class="v">content</i><i class="p">.</i><i class="v">component </i><i class="p">== </i><i class="s">'category'</i><i class="b1">)</i>
<i class="b1">    {</i>
<i class="v">        backLink </i><i class="p">= </i><i class="s">"/blog/"</i>
<i class="v">        backLabel </i><i class="p">= </i><i class="s">"Torna al Blog"</i>
<i class="b1">    }</i>
<i class="k">    else if</i><i class="b1">(</i><i class="v">story</i><i class="p">.</i><i class="v">content</i><i class="p">.</i><i class="v">component </i><i class="p">== </i><i class="s">'page'</i><i class="b1">)</i>
<i class="b1">    {</i>
<i class="v">        backLink </i><i class="p">= </i><i class="b1">(</i><i class="v">story</i><i class="p">.</i><i class="v">content</i><i class="p">.</i><i class="v">parents </i><i class="p">&amp;&amp; </i><i class="v">story</i><i class="p">.</i><i class="v">content</i><i class="p">.</i><i class="v">parents</i><i class="b1">[</i><i class="n">0</i><i class="b1">]) </i><i class="p">? </i><i class="v">story</i><i class="p">.</i><i class="v">content</i><i class="p">.</i><i class="v">parents</i><i class="b1">[</i><i class="n">0</i><i class="b1">]</i><i class="p">.</i><i class="v">full_slug </i><i class="p">: </i><i class="v">backLink</i>
<i class="v">        backLabel </i><i class="p">= </i><i class="b1">(</i><i class="v">story</i><i class="p">.</i><i class="v">content</i><i class="p">.</i><i class="v">parents </i><i class="p">&amp;&amp; </i><i class="v">story</i><i class="p">.</i><i class="v">content</i><i class="p">.</i><i class="v">parents</i><i class="b1">[</i><i class="n">0</i><i class="b1">]) </i><i class="p">? </i><i class="s">"Torna a " </i><i class="p">+ </i><i class="v">story</i><i class="p">.</i><i class="v">content</i><i class="p">.</i><i class="v">parents</i><i class="b1">[</i><i class="n">0</i><i class="b1">]</i><i class="p">.</i><i class="v">name </i><i class="p">: </i><i class="v">backLabel</i>
<i class="b1">    }</i>

<i class="m">    //Manage OpenGraph Data</i>
<i class="b">    let </i><i class="v">ogData </i><i class="p">= </i><i class="b1">{</i>
<i class="v">        url</i><i class="p">: </i><i class="v">process</i><i class="p">.</i><i class="v">env</i><i class="p">.</i><i class="v">NEXT_PUBLIC_SITE_URL </i><i class="p">+ </i><i class="v">story</i><i class="p">.</i><i class="v">full_slug</i><i class="p">,</i>
<i class="v">        title</i><i class="p">: </i><i class="v">story</i><i class="p">.</i><i class="v">content</i><i class="p">.</i><i class="v">metatitle </i><i class="p">? </i><i class="v">story</i><i class="p">.</i><i class="v">content</i><i class="p">.</i><i class="v">metatitle </i><i class="p">: </i><i class="v">story</i><i class="p">.</i><i class="v">content</i><i class="p">.</i><i class="v">title</i><i class="p">,</i>
<i class="v">        description</i><i class="p">: </i><i class="v">story</i><i class="p">.</i><i class="v">content</i><i class="p">.</i><i class="v">metadescription </i><i class="p">? </i><i class="v">story</i><i class="p">.</i><i class="v">content</i><i class="p">.</i><i class="v">metadescription </i><i class="p">: </i><i class="v">story</i><i class="p">.</i><i class="v">content</i><i class="p">.</i><i class="v">subtitle</i><i class="p">,</i>
<i class="v">        images</i><i class="p">: </i><i class="b1">[</i>
<i class="b1">            {</i>
<i class="v">                url</i><i class="p">: </i><i class="b1">(</i><i class="v">story</i><i class="p">.</i><i class="v">content</i><i class="p">.</i><i class="v">featuredimage </i><i class="p">&amp;&amp; </i><i class="v">story</i><i class="p">.</i><i class="v">content</i><i class="p">.</i><i class="v">featuredimage</i><i class="p">.</i><i class="v">filename</i><i class="b1">) </i><i class="p">? </i><i class="v">story</i><i class="p">.</i><i class="v">content</i><i class="p">.</i><i class="v">featuredimage</i><i class="p">.</i><i class="v">filename </i><i class="p">: </i><i class="s">''</i><i class="p">,</i>
<i class="v">                width</i><i class="p">: </i><i class="n">1200</i><i class="p">,</i>
<i class="v">                height</i><i class="p">: </i><i class="n">630</i><i class="p">,</i>
<i class="v">                alt</i><i class="p">: </i><i class="v">story</i><i class="p">.</i><i class="v">content</i><i class="p">.</i><i class="v">metatitle </i><i class="p">? </i><i class="v">story</i><i class="p">.</i><i class="v">content</i><i class="p">.</i><i class="v">metatitle </i><i class="p">: </i><i class="v">story</i><i class="p">.</i><i class="v">content</i><i class="p">.</i><i class="v">title</i><i class="p">,</i>
<i class="m">                //type: 'image/jpeg',</i>
<i class="b1">            }</i>
<i class="b1">        ]</i><i class="p">,</i>
<i class="v">        type</i><i class="p">: </i><i class="s">''</i><i class="p">,</i>
<i class="v">        article</i><i class="p">: </i><i class="b1">{}</i>
<i class="b1">    }</i>

<i class="m">    //Custom OGG for posts</i>
<i class="k">    if</i><i class="b1">(</i><i class="v">story</i><i class="p">.</i><i class="v">content</i><i class="p">.</i><i class="v">component </i><i class="p">== </i><i class="s">'post'</i><i class="b1">)</i>
<i class="b1">    {</i>
<i class="v">        ogData</i><i class="p">.</i><i class="v">type </i><i class="p">= </i><i class="s">'article'</i>
<i class="v">        ogData</i><i class="p">.</i><i class="v">article </i><i class="p">= </i><i class="b1">{</i>
<i class="v">            publishedTime</i><i class="p">: </i><i class="v">story</i><i class="p">.</i><i class="v">first_published_at</i><i class="p">,</i>
<i class="v">            modifiedTime</i><i class="p">: </i><i class="v">story</i><i class="p">.</i><i class="v">published_at</i><i class="p">,</i>
<i class="v">            authors</i><i class="p">: </i><i class="v">story</i><i class="p">.</i><i class="v">content</i><i class="p">.</i><i class="v">categories</i><i class="p">.</i><i class="f">map</i><i class="b1">((</i><i class="v">cat</i><i class="p">, </i><i class="v">index</i><i class="b1">) </i><i class="p">=</i><i class="g">&gt; </i><i class="b1">{ </i><i class="k">return </i><i class="v">cat</i><i class="p">.</i><i class="v">name </i><i class="b1">})</i><i class="p">,</i>
<i class="b1">        }</i>
<i class="b1">    }</i>

<i class="k">    return</i><i class="b1">(</i>
<i class="g">        &lt;&gt;</i>
<i class="g">            &lt;</i><i class="t">NextSeo</i>
<i class="a">                title</i><i class="p">=</i><i class="b1">{</i><i class="v">story</i><i class="p">.</i><i class="v">content</i><i class="p">.</i><i class="v">metatitle </i><i class="p">? </i><i class="v">story</i><i class="p">.</i><i class="v">content</i><i class="p">.</i><i class="v">metatitle </i><i class="p">: </i><i class="v">story</i><i class="p">.</i><i class="v">content</i><i class="p">.</i><i class="v">title</i><i class="b1">}</i>
<i class="a">                description</i><i class="p">=</i><i class="b1">{</i><i class="v">story</i><i class="p">.</i><i class="v">content</i><i class="p">.</i><i class="v">metadescription </i><i class="p">? </i><i class="v">story</i><i class="p">.</i><i class="v">content</i><i class="p">.</i><i class="v">metadescription </i><i class="p">: </i><i class="v">story</i><i class="p">.</i><i class="v">content</i><i class="p">.</i><i class="v">subtitle</i><i class="b1">}</i>
<i class="a">                openGraph</i><i class="p">=</i><i class="b1">{</i><i class="v">ogData</i><i class="b1">}</i>
<i class="a">                noindex</i><i class="p">=</i><i class="b1">{</i><i class="v">story</i><i class="p">.</i><i class="v">content</i><i class="p">.</i><i class="v">seonoindex</i><i class="b1">}</i>
<i class="a">                nofollow</i><i class="p">=</i><i class="b1">{</i><i class="v">story</i><i class="p">.</i><i class="v">content</i><i class="p">.</i><i class="v">seonoindex</i><i class="b1">}</i>
<i class="g">            /&gt;</i>
<i class="g">            &lt;</i><i class="t">PageSection</i>
<i class="a">                name</i><i class="p">=</i><i class="s">"HeroSection"</i>
<i class="a">                background</i><i class="p">=</i><i class="s">"bg-slate-900"</i>
<i class="a">                maxWidthIndex</i><i class="p">=</i><i class="s">"max-w-nextimeright_bredis"</i>
<i class="a">                paddingVertical</i><i class="p">=</i><i class="s">"sectionpad"</i><i class="v">pt</i><i class="p">-</i><i class="n">40 </i><i class="v">pb</i><i class="p">-</i><i class="n">20</i><i class="s">"</i>
<i class="g">            &gt;</i>
<i class="g">                &lt;div </i><i class="a">className</i><i class="p">=</i><i class="s">"grid grid-cols-12"</i><i class="g">&gt;</i>
<i class="g">                    &lt;div </i><i class="a">className</i><i class="p">=</i><i class="s">"col-span-12 lg:col-span-8 flex flex-col items-start justify-center"</i><i class="g">&gt;</i>
<i class="b1">                        { </i><i class="v">story</i><i class="p">.</i><i class="v">content</i><i class="p">.</i><i class="v">component </i><i class="p">== </i><i class="s">'category' </i><i class="p">&amp;&amp;</i>
<i class="g">                            &lt;div </i><i class="a">className</i><i class="p">=</i><i class="s">"postMeta mb-2"</i><i class="g">&gt;</i>
<i class="g">                                &lt;span </i><i class="a">className</i><i class="p">=</i><i class="s">"inline-block text-sm text-slate-400 py-1 px-2 mr-2 rounded border border-slate-600"</i><i class="g">&gt;</i>
<i class="g">                                &lt;span </i><i class="a">className</i><i class="p">=</i><i class="s">"inline-block text-sm text-slate-400"</i><i class="g">&gt;</i><i class="b1">{</i><i class="v">extraData</i><i class="p">.</i><i class="v">blogArchive</i><i class="p">.</i><i class="v">totalPosts</i><i class="b1">} </i><i class="v">articoli</i><i class="g">&lt;/span&gt;</i>
<i class="g">                            &lt;/div&gt;</i>
<i class="b1">                        }</i>

<i class="b1">                        { </i><i class="v">story</i><i class="p">.</i><i class="v">content</i><i class="p">.</i><i class="v">component </i><i class="p">== </i><i class="s">'post' </i><i class="p">&amp;&amp;</i>
<i class="g">                            &lt;div </i><i class="a">className</i><i class="p">=</i><i class="s">"postMeta mb-2"</i><i class="g">&gt;</i>
<i class="b1">                                {(</i><i class="v">story</i><i class="p">.</i><i class="v">content</i><i class="p">.</i><i class="v">categories </i><i class="p">&amp;&amp; </i><i class="v">story</i><i class="p">.</i><i class="v">content</i><i class="p">.</i><i class="v">categories</i><i class="p">.</i><i class="v">length </i><i class="g">&gt; </i><i class="n">0</i><i class="b1">) </i><i class="p">? </i><i class="v">story</i><i class="p">.</i><i class="v">content</i><i class="p">.</i><i class="v">categories</i><i class="p">.</i><i class="f">map</i><i class="b1">((</i><i class="v">cat</i><i class="p">, </i><i class="v">index</i><i class="b1">) </i><i class="p">=</i><i class="g">&gt; </i><i class="b1">{</i>
<i class="k">                                    return</i><i class="b1">(</i>
<i class="g">                                        &lt;</i><i class="t">Link </i><i class="a">key</i><i class="p">=</i><i class="b1">{</i><i class="v">index</i><i class="b1">}</i>
<i class="a">                                        hlnk</i><i class="p">=</i><i class="b1">{</i><i class="v">cat</i><i class="p">.</i><i class="v">full_slug </i><i class="p">? </i><i class="v">cat</i><i class="p">.</i><i class="v">full_slug </i><i class="p">: </i><i class="s">'/blog/'</i><i class="b1">}</i><i class="g">&gt;</i>

<i class="g">                                        &lt;span </i><i class="a">className</i><i class="p">=</i><i class="s">"inline-block text-sm text-slate-400 py-1 px-2 mr-2</i>
<i class="b1">                                            {</i><i class="v">cat</i><i class="p">.</i><i class="v">name </i><i class="p">? </i><i class="v">cat</i><i class="p">.</i><i class="v">name </i><i class="p">: </i><i class="s">'Senza categoria'</i><i class="b1">}</i>
<i class="g">                                        &lt;/span&gt;</i>
<i class="g">                                    &lt;/</i><i class="t">Link</i><i class="g">&gt;</i>
<i class="b1">                            )}) </i><i class="p">: </i><i class="b">null</i><i class="b1">}</i>
<i class="b1">                            {</i><i class="v">story</i><i class="p">.</i><i class="v">first_published_at </i><i class="p">&amp;&amp;</i>
<i class="g">                                &lt;span </i><i class="a">className</i><i class="p">=</i><i class="s">"inline-block text-sm text-slate-400"</i><i class="g">&gt;</i>
<i class="b1">                                    {</i><i class="f">dayjs</i><i class="b1">(</i><i class="v">story</i><i class="p">.</i><i class="v">first_published_at</i><i class="b1">)</i><i class="p">.</i><i class="f">fromNow</i><i class="b1">()}</i>
<i class="g">                                &lt;/span&gt;</i>
<i class="b1">                            }</i>
<i class="g">                            &lt;/div&gt;</i>
<i class="b1">                        }</i>
<i class="g">                    &lt;</i><i class="t">HeroTitle</i>
<i class="a">                        title</i><i class="p">=</i><i class="b1">{(</i><i class="v">story</i><i class="p">.</i><i class="v">content</i><i class="p">.</i><i class="v">title </i><i class="p">&amp;&amp; </i><i class="v">story</i><i class="p">.</i><i class="v">content</i><i class="p">.</i><i class="v">title</i><i class="p">.</i><i class="v">length </i><i class="g">&gt; </i><i class="n">0</i><i class="b1">) </i><i class="p">? </i><i class="v">story</i><i class="p">.</i><i class="v">content</i><i class="p">.</i><i class="v">title </i><i class="p">: </i><i class="v">story</i><i class="p">.</i><i class="v">name</i><i class="b1">}</i>
<i class="a">                        subtitle</i><i class="p">=</i><i class="b1">{</i><i class="v">story</i><i class="p">.</i><i class="v">content</i><i class="p">.</i><i class="v">subtitle</i><i class="b1">}</i>
<i class="a">                        link</i><i class="p">=</i><i class="b1">{</i><i class="v">backLink</i><i class="b1">}</i>
<i class="a">                        linkText</i><i class="p">=</i><i class="b1">{</i><i class="v">backLabel</i><i class="b1">}</i>
<i class="a">                        showHearth</i><i class="p">=</i><i class="b1">{(</i><i class="v">story</i><i class="p">.</i><i class="v">content</i><i class="p">.</i><i class="v">showhearth </i><i class="p">&amp;&amp; </i><i class="v">story</i><i class="p">.</i><i class="v">content</i><i class="p">.</i><i class="v">showhearth </i><i class="p">== </i><i class="b">true</i><i class="b1">) </i><i class="p">? </i><i class="b">true </i><i class="p">: </i><i class="b">false</i><i class="b1">}</i>
<i class="g">                    /&gt;</i>
<i class="g">                    &lt;/div&gt;</i>
<i class="g">                &lt;/div&gt;</i>
<i class="g">            &lt;/</i><i class="t">PageSection</i><i class="g">&gt;</i>

<i class="g">            &lt;</i><i class="t">PageContext</i><i class="p">.</i><i class="t">Provider </i><i class="a">value</i><i class="p">=</i><i class="b1">{</i><i class="v">extraData</i><i class="b1">}</i><i class="g">&gt;</i>

<i class="m">                {/* POSTS */}</i>
<i class="b1">                {</i><i class="v">story</i><i class="p">.</i><i class="v">content</i><i class="p">.</i><i class="v">component </i><i class="p">== </i><i class="s">'post' </i><i class="p">&amp;&amp;</i>
<i class="g">                    &lt;&gt;</i>
<i class="g">                        &lt;</i><i class="t">PageSection</i>
<i class="a">                            name</i><i class="p">=</i><i class="s">"ArticleSection"</i>
<i class="a">                            paddingVertical</i><i class="p">=</i><i class="s">"contentsection pt-16"</i>
<i class="g">                        &gt;</i>
<i class="g">                            &lt;div </i><i class="a">className</i><i class="p">=</i><i class="s">"grid grid-cols-12 relative items-start"</i><i class="g">&gt;</i>
<i class="g">                                &lt;div </i><i class="a">className</i><i class="p">=</i><i class="s">"col-span-12 md:col-span-1 md:pr-12 lg:pr-6 md:text-center flex md:flex-col"</i><i class="g">&gt;</i>
<i class="g">                                    &lt;</i><i class="t">SocialShare</i>
<i class="a">                                        variant</i><i class="p">=</i><i class="s">"black"</i>
<i class="a">                                        currentUrl</i><i class="p">=</i><i class="b1">{</i><i class="b">typeof </i><i class="v">document </i><i class="p">!== </i><i class="s">'undefined' </i><i class="p">? </i><i class="v">document</i><i class="p">.</i><i class="v">location</i><i class="p">.</i><i class="v">hlnk </i><i class="p">: </i><i class="s">''</i><i class="b1">}</i>
<i class="a">                                        currentPageTitle</i><i class="p">=</i><i class="b1">{</i><i class="v">story</i><i class="p">.</i><i class="v">content</i><i class="p">.</i><i class="v">title</i><i class="b1">}</i>
<i class="a">                                        contentTitle</i><i class="p">=</i><i class="b1">{</i><i class="v">story</i><i class="p">.</i><i class="v">content</i><i class="p">.</i><i class="v">metatitle </i><i class="p">? </i><i class="v">story</i><i class="p">.</i><i class="v">content</i><i class="p">.</i><i class="v">metatitle </i><i class="p">: </i><i class="v">story</i><i class="p">.</i><i class="v">name</i><i class="b1">}</i>
<i class="a">                                        contentText</i><i class="p">=</i><i class="b1">{</i><i class="v">story</i><i class="p">.</i><i class="v">content</i><i class="p">.</i><i class="v">metadescription </i><i class="p">? </i><i class="v">story</i><i class="p">.</i><i class="v">content</i><i class="p">.</i><i class="v">metadescription </i><i class="p">: </i><i class="s">''</i><i class="b1">}</i>
<i class="a">                                        contentImage</i><i class="p">=</i><i class="b1">{</i><i class="v">story</i><i class="p">.</i><i class="v">content</i><i class="p">.</i><i class="v">ogimage</i><i class="p">?.</i><i class="v">filename </i><i class="p">? </i><i class="v">story</i><i class="p">.</i><i class="v">content</i><i class="p">.</i><i class="v">ogimage</i><i class="p">.</i><i class="v">filename </i><i class="p">: </i><i class="s">''</i><i class="b1">}</i>
<i class="g">                                    /&gt;</i>
<i class="g">                                &lt;/div&gt;</i>
<i class="g">                                &lt;div </i><i class="a">className</i><i class="p">=</i><i class="s">"col-span-12 md:col-span-10 lg:col-span-7 md:pr-12"</i><i class="g">&gt;</i>
<i class="b1">                                    { </i><i class="v">story</i><i class="p">.</i><i class="v">content</i><i class="p">.</i><i class="v">featuredimage</i><i class="p">?.</i><i class="v">filename </i><i class="p">&amp;&amp;</i>
<i class="g">                                        &lt;section </i><i class="a">className</i><i class="p">=</i><i class="s">"postSection md:-ml-12 md:-mr-12 mb-12"</i><i class="g">&gt;</i>
<i class="g">                                            &lt;</i><i class="t">Image</i>
<i class="a">                                                img</i><i class="p">=</i><i class="b1">{</i><i class="v">story</i><i class="p">.</i><i class="v">content</i><i class="p">.</i><i class="v">featuredimage</i><i class="p">?.</i><i class="v">filename </i><i class="p">+ </i><i class="s">'/m/1280x720'</i><i class="b1">}</i>
<i class="a">                                                alt</i><i class="p">=</i><i class="b1">{</i><i class="v">story</i><i class="p">.</i><i class="v">content</i><i class="p">.</i><i class="v">title</i><i class="b1">}</i>
<i class="a">                                                width</i><i class="p">=</i><i class="b1">{</i><i class="n">1280</i><i class="b1">}</i>
<i class="a">                                                height</i><i class="p">=</i><i class="b1">{</i><i class="n">720</i><i class="b1">}</i>
<i class="a">                                                className</i><i class="p">=</i><i class="s">"rounded-xl w-full"</i>
<i class="g">                                            /&gt;</i>
<i class="g">                                        &lt;/section&gt;</i>
<i class="b1">                                    }</i>
<i class="g">                                    &lt;</i><i class="t">StoryblokComponent </i><i class="a">blok</i><i class="p">=</i><i class="b1">{</i><i class="v">story</i><i class="p">.</i><i class="v">content</i><i class="b1">} </i><i class="g">/&gt;</i>
<i class="g">                                &lt;/div&gt;</i>

<i class="g">                                &lt;div </i><i class="a">className</i><i class="p">=</i><i class="s">"col-span-12 lg:col-span-4 md:pl-16 lg:pl-12 lg:sticky top-32 mt-12 lg:mt-0"</i><i class="g">&gt;</i>
<i class="b1">                                    { </i><i class="v">extraData</i><i class="p">.</i><i class="v">relatedPosts</i><i class="p">?.</i><i class="v">stories </i><i class="p">&amp;&amp; </i><i class="v">extraData</i><i class="p">.</i><i class="v">relatedPosts</i><i class="p">?.</i><i class="v">stories</i><i class="p">.</i><i class="v">length </i><i class="g">&gt; </i><i class="n">0 </i><i class="p">&amp;&amp;</i>
<i class="g">                                        &lt;&gt;</i>
<i class="g">                                            &lt;p </i><i class="a">className</i><i class="p">=</i><i class="s">"font-sm text-slate-500 tracking-widest uppercase mb-6"</i><i class="g">&gt;</i>
<i class="g">                                                &lt;</i><i class="t">FaHeart </i><i class="a">className</i><i class="p">=</i><i class="s">"inline text-red-500 mr-2" </i><i class="g">/&gt; </i><i class="v">Letture consigliate</i>
<i class="g">                                            &lt;/p&gt;</i>

<i class="g">                                            &lt;ul&gt;</i>
<i class="b1">                                                { </i><i class="v">extraData</i><i class="p">.</i><i class="v">relatedPosts</i><i class="p">?.</i><i class="v">stories </i><i class="p">? </i><i class="v">extraData</i><i class="p">.</i><i class="v">relatedPosts</i><i class="p">?.</i><i class="v">stories</i><i class="p">.</i><i class="f">map</i><i class="b1">((</i><i class="v">relatedPost</i><i class="p">, </i><i class="v">index</i><i class="b1">) </i><i class="p">=</i><i class="g">&gt; </i><i class="b1">{</i>

<i class="k">                                                    return</i><i class="b1">(</i>
<i class="g">                                                        &lt;li </i><i class="a">key</i><i class="p">=</i><i class="b1">{</i><i class="v">index</i><i class="b1">}</i><i class="g">&gt;</i>
<i class="g">                                                            &lt;</i><i class="t">Link</i>
<i class="a">                                                                hlnk</i><i class="p">=</i><i class="b1">{</i><i class="v">relatedPost</i><i class="p">.</i><i class="v">full_slug</i><i class="b1">}</i>
<i class="a">                                                                className</i><i class="p">=</i><i class="s">"block w-full text-black hover:text-blue-600 mb-4"</i>
<i class="g">                                                                &gt;</i>
<i class="b1">                                                                {</i><i class="v">relatedPost</i><i class="p">.</i><i class="v">content</i><i class="p">.</i><i class="v">title</i><i class="b1">}</i>
<i class="g">                                                            &lt;/</i><i class="t">Link</i><i class="g">&gt;</i>
<i class="g">                                                            &lt;hr </i><i class="a">className</i><i class="p">=</i><i class="s">"border-1/4 h-px text-black my-4" </i><i class="g">/&gt;</i>
<i class="g">                                                        &lt;/li&gt;</i>
<i class="b1">                                                    )</i>

<i class="b1">                                                }) </i><i class="p">: </i><i class="b">null </i><i class="b1">}</i>
<i class="g">                                            &lt;/ul&gt;</i>
<i class="g">                                        &lt;/&gt;</i>
<i class="b1">                                    }</i>
<i class="g">                                &lt;/div&gt;</i>
<i class="g">                            &lt;/div&gt;</i>
<i class="g">                        &lt;/</i><i class="t">PageSection</i><i class="g">&gt;</i>

<i class="g">                        &lt;</i><i class="t">PageSection</i>
<i class="a">                            name</i><i class="p">=</i><i class="s">"postCtaSection"</i>
<i class="a">                            background</i><i class="p">=</i><i class="s">"bg-slate-100"</i>
<i class="a">                            maxWidthIndex</i><i class="p">=</i><i class="s">"max-w-maglia--hero--right"</i>
<i class="a">                            paddingVertical</i><i class="p">=</i><i class="s">"contentsection pt-16 pb-8"</i>
<i class="g">                        &gt;</i>
<i class="g">                            &lt;div </i><i class="a">className</i><i class="p">=</i><i class="s">"grid grid-cols-12 border-t border-slate-200 pt-12"</i><i class="g">&gt;</i>
<i class="g">                                &lt;div </i><i class="a">className</i><i class="p">=</i><i class="s">"col-span-12 lg:col-span-6"</i><i class="g">&gt;</i>
<i class="g">                                    &lt;h4 </i><i class="a">className</i><i class="p">=</i><i class="s">"text-2xl font-bold mb-2"</i><i class="g">&gt;</i><i class="v">Hai trovato interessante questo articolo</i><i class="p">?</i><i class="g">&lt;/h4&gt;</i>
<i class="g">                                    &lt;p </i><i class="a">className</i><i class="p">=</i><i class="s">"text-lg"</i><i class="g">&gt;</i><i class="v">Condividilo con Social</i><i class="p">, </i><i class="v">o contattami per farmi sapere cosa ne pensi</i><i class="p">!</i><i class="g">&lt;/p&gt;</i>
<i class="g">                                &lt;/div&gt;</i>
<i class="g">                                &lt;div </i><i class="a">className</i><i class="p">=</i><i class="s">"col-span-12 lg:col-span-6 pt-8 lg:pt-0 lg:text-right flex items-center lg:justify-end"</i><i class="g">&gt;</i>
<i class="g">                                    &lt;</i><i class="t">SiteButton</i>
<i class="a">                                        link</i><i class="p">=</i><i class="s">"/supporta/donazione/?hosted_button_id=XXXXXXXXXXXXXXXXXXXXXXX"</i>
<i class="a">                                        target</i><i class="p">=</i><i class="s">"_blank"</i>
<i class="a">                                        icon</i><i class="p">=</i><i class="s">"heart"</i>
<i class="a">                                        text</i><i class="p">=</i><i class="s">"Supportami"</i>
<i class="a">                                        mode</i><i class="p">=</i><i class="s">"rose-power"</i>
<i class="a">                                        boxShadow</i><i class="p">=</i><i class="s">"md-2"</i>
<i class="a">                                        leadPosition</i><i class="p">=</i><i class="s">"right"</i>
<i class="g">                                    /&gt;</i>
<i class="g">                                    &lt;</i><i class="t">SiteButton</i>
<i class="a">                                        link</i><i class="p">=</i><i class="s">"/contatti/"</i>
<i class="a">                                        type</i><i class="p">=</i><i class="s">"standard"</i>
<i class="a">                                        label</i><i class="p">=</i><i class="s">"Contattami"</i>
<i class="a">                                        icon</i><i class="p">=</i><i class="s">"contropagina/generally"</i>
<i class="a">                                        leadPosition</i><i class="p">=</i><i class="s">"right"</i>
<i class="g">                                    /&gt;</i>
<i class="g">                                &lt;/div&gt;</i>
<i class="g">                            &lt;/div&gt;</i>
<i class="g">                        &lt;/</i><i class="t">PageSection</i><i class="g">&gt;</i>
<i class="g">                    &lt;/&gt;</i>
<i class="b1">                }</i>

<i class="m">                {/* PAGES / CATEGORIES */}</i>
<i class="b1">                {(</i><i class="v">story</i><i class="p">.</i><i class="v">content</i><i class="p">.</i><i class="v">component </i><i class="p">== </i><i class="s">'page' </i><i class="p">|| </i><i class="v">story</i><i class="p">.</i><i class="v">content</i><i class="p">.</i><i class="v">component </i><i class="p">== </i><i class="s">'category'</i><i class="b1">) </i><i class="p">&amp;&amp;</i>
<i class="g">                    &lt;</i><i class="t">StoryblokComponent </i><i class="a">blok</i><i class="p">=</i><i class="b1">{</i><i class="v">story</i><i class="p">.</i><i class="v">content</i><i class="b1">} </i><i class="g">/&gt;</i>
<i class="b1">                }</i>
<i class="g">            &lt;/</i><i class="t">PageContext</i><i class="p">.</i><i class="t">Provider</i><i class="g">&gt;</i>

<i class="g">        &lt;/&gt;</i>
<i class="b1">    )</i>
<i class="b1">}</i>

<i class="k">export </i><i class="b">async function </i><i class="f">getStaticPaths</i><i class="b1">(</i><i class="v">params</i><i class="b1">) {</i>

<i class="b">    const </i><i class="v">storyblokApi </i><i class="p">= </i><i class="f">getStoryblokApi</i><i class="b1">()</i><i class="p">;</i>
<i class="b">    let </i><i class="b1">{</i><i class="v">data</i><i class="b1">} </i><i class="p">= </i><i class="k">await </i><i class="v">storyblokApi</i><i class="p">.</i><i class="f">get</i><i class="b1">(</i><i class="s">'cdn/links/'</i><i class="p">, </i><i class="b1">{</i>
<i class="v">        version</i><i class="p">: </i><i class="v">process</i><i class="p">.</i><i class="v">env</i><i class="p">.</i><i class="v">NODE_ENV </i><i class="p">== </i><i class="s">"development" </i><i class="p">? </i><i class="s">"draft" </i><i class="p">: </i><i class="s">"published"</i>
<i class="b1">    })</i><i class="p">;</i>

<i class="b">    let </i><i class="v">paths </i><i class="p">= </i><i class="b1">[]</i><i class="p">;</i>
<i class="v">    Object</i><i class="p">.</i><i class="f">keys</i><i class="b1">(</i><i class="v">data</i><i class="p">.</i><i class="v">links</i><i class="b1">)</i><i class="p">.</i><i class="f">forEach</i><i class="b1">((</i><i class="v">linkKey</i><i class="b1">) </i><i class="p">=</i><i class="g">&gt; </i><i class="b1">{</i>

<i class="k">        if </i><i class="b1">(</i><i class="v">data</i><i class="p">.</i><i class="v">links</i><i class="b1">[</i><i class="v">linkKey</i><i class="b1">]</i><i class="p">.</i><i class="v">is_folder </i><i class="p">|| </i><i class="v">data</i><i class="p">.</i><i class="v">links</i><i class="b1">[</i><i class="v">linkKey</i><i class="b1">]</i><i class="p">.</i><i class="v">slug </i><i class="p">=== </i><i class="s">"home"</i><i class="b1">) {</i>
<i class="k">            return</i><i class="p">;</i>
<i class="b1">        }</i>

<i class="b">        const </i><i class="v">slug </i><i class="p">= </i><i class="v">data</i><i class="p">.</i><i class="v">links</i><i class="b1">[</i><i class="v">linkKey</i><i class="b1">]</i><i class="p">.</i><i class="v">slug</i>
<i class="b">        let </i><i class="v">splittedSlug </i><i class="p">= </i><i class="v">slug</i><i class="p">.</i><i class="f">split</i><i class="b1">(</i><i class="s">"/"</i><i class="b1">)</i><i class="p">;</i>

<i class="v">        paths</i><i class="p">.</i><i class="f">push</i><i class="b1">({</i><i class="v">params</i><i class="p">: </i><i class="b1">{</i><i class="v">slug</i><i class="p">: </i><i class="v">splittedSlug</i><i class="b1">}})</i><i class="p">;</i>
<i class="b1">    })</i><i class="p">;</i>

<i class="k">    return </i><i class="b1">{</i>
<i class="v">        paths</i><i class="p">: </i><i class="v">paths</i><i class="p">,</i>
<i class="v">        fallback</i><i class="p">: </i><i class="b">false</i><i class="p">,</i>
<i class="b1">    }</i><i class="p">;</i>

<i class="b1">}</i>

<i class="k">export </i><i class="b">async function </i><i class="f">getStaticProps</i><i class="b1">({ </i><i class="v">params </i><i class="b1">}) {</i>

<i class="m">    //Catch both pages and subpages</i>
<i class="b">    let </i><i class="v">slug </i><i class="p">= </i><i class="v">params</i><i class="p">.</i><i class="v">slug</i><i class="p">.</i><i class="f">join</i><i class="b1">(</i><i class="s">"/"</i><i class="b1">)</i>

<i class="b">    let </i><i class="v">sbParams</i><i class="p">: </i><i class="t">ISbStoriesParams </i><i class="p">= </i><i class="b1">{</i>
<i class="v">        version</i><i class="p">: </i><i class="v">process</i><i class="p">.</i><i class="v">env</i><i class="p">.</i><i class="v">NODE_ENV </i><i class="p">== </i><i class="s">"development" </i><i class="p">? </i><i class="s">"draft" </i><i class="p">: </i><i class="s">"published"</i><i class="p">,</i>
<i class="v">        resolve_relations</i><i class="p">: </i><i class="s">"page.parents,post.categories"</i>
<i class="b1">    }</i><i class="p">;</i>

<i class="b">    const </i><i class="v">storyblokApi </i><i class="p">= </i><i class="f">getStoryblokApi</i><i class="b1">()</i><i class="p">;</i>
<i class="b">    let </i><i class="b1">{ </i><i class="v">data </i><i class="b1">} </i><i class="p">= </i><i class="k">await </i><i class="v">storyblokApi</i><i class="p">.</i><i class="f">get</i><i class="b1">(</i><i class="s">`cdn/stories/${slug}`</i><i class="p">, </i><i class="v">sbParams</i><i class="b1">)</i><i class="p">;</i>

<i class="m">    //Fetch extra data if needed</i>
<i class="b">    let </i><i class="v">extraData</i><i class="p">: </i><i class="t">PageExtraData </i><i class="p">= </i><i class="b1">{}</i>

<i class="m">    //Pages...</i>
<i class="k">    if</i><i class="b1">(</i><i class="v">data</i><i class="p">.</i><i class="v">story</i><i class="p">.</i><i class="v">content</i><i class="p">.</i><i class="v">component </i><i class="p">== </i><i class="s">'page'</i><i class="b1">)</i>
<i class="b1">    {</i>
<i class="k">        if</i><i class="b1">(</i><i class="v">data</i><i class="p">.</i><i class="v">story</i><i class="p">.</i><i class="v">slug </i><i class="p">== </i><i class="s">'fotografie'</i><i class="b1">)</i>
<i class="b1">        {</i>
<i class="m">            //Have Media Archive</i>
<i class="b">            const </i><i class="v">storyblokApi </i><i class="p">= </i><i class="f">getStoryblokApi</i><i class="b1">()</i><i class="p">;</i>
<i class="b">            const </i><i class="b1">{ </i><i class="v">data </i><i class="b1">} </i><i class="p">= </i><i class="k">await </i><i class="v">storyblokApi</i><i class="p">.</i><i class="f">get</i><i class="b1">(</i><i class="s">`cdn/stories`</i><i class="p">, </i><i class="b1">{</i>
<i class="v">                version</i><i class="p">: </i><i class="v">process</i><i class="p">.</i><i class="v">env</i><i class="p">.</i><i class="v">NODE_ENV </i><i class="p">== </i><i class="s">"development" </i><i class="p">? </i><i class="s">"draft" </i><i class="p">: </i><i class="s">"published"</i><i class="p">,</i>
<i class="v">                starts_with</i><i class="p">: </i><i class="s">"fotografie/"</i><i class="p">,</i>
<i class="v">                is_startpage</i><i class="p">: </i><i class="n">0</i><i class="p">,</i>
<i class="v">                sort_by</i><i class="p">: </i><i class="s">"name:asc"</i>
<i class="b1">            })</i><i class="p">;</i>

<i class="v">            extraData</i><i class="p">.</i><i class="v">galleryArchive </i><i class="p">= </i><i class="v">data</i>
<i class="b1">        }</i>
<i class="k">        else if</i><i class="b1">(</i><i class="v">data</i><i class="p">.</i><i class="v">story</i><i class="p">.</i><i class="v">slug </i><i class="p">== </i><i class="s">'blog'</i><i class="b1">)</i>
<i class="b1">        {</i>
<i class="m">            //Have Blog Archive</i>
<i class="b">            const </i><i class="v">storyblokApi </i><i class="p">= </i><i class="f">getStoryblokApi</i><i class="b1">()</i><i class="p">;</i>
<i class="b">            const </i><i class="v">sbResponse </i><i class="p">= </i><i class="k">await </i><i class="v">storyblokApi</i><i class="p">.</i><i class="f">get</i><i class="b1">(</i><i class="s">`cdn/stories`</i><i class="p">, </i><i class="b1">{</i>
<i class="v">                version</i><i class="p">: </i><i class="v">process</i><i class="p">.</i><i class="v">env</i><i class="p">.</i><i class="v">NODE_ENV </i><i class="p">== </i><i class="s">"development" </i><i class="p">? </i><i class="s">"draft" </i><i class="p">: </i><i class="s">"published"</i><i class="p">,</i>
<i class="v">                starts_with</i><i class="p">: </i><i class="s">"blog/"</i><i class="p">,</i>
<i class="v">                excluding_fields</i><i class="p">: </i><i class="s">"body"</i><i class="p">,</i>
<i class="v">                is_startpage</i><i class="p">: </i><i class="n">0</i><i class="p">,</i>
<i class="v">                per_page</i><i class="p">: </i><i class="v">process</i><i class="p">.</i><i class="v">env</i><i class="p">.</i><i class="v">NEXT_PUBLIC_POSTS_PER_PAGE </i><i class="k">as </i><i class="t">unknown </i><i class="k">as </i><i class="t">number</i><i class="p">,</i>
<i class="v">                page</i><i class="p">: </i><i class="n">1</i><i class="p">,</i>
<i class="v">                sort_by</i><i class="p">: </i><i class="s">"first_published_at:desc"</i>
<i class="b1">            })</i><i class="p">;</i>
<i class="m">            //Generate SuperBResponse</i>
<i class="v">            extraData</i><i class="p">.</i><i class="v">blogArchive </i><i class="p">= </i><i class="b1">{</i>
<i class="v">                data</i><i class="p">: </i><i class="v">sbResponse</i><i class="p">.</i><i class="v">data</i><i class="p">,</i>
<i class="v">                totalPosts</i><i class="p">: </i><i class="v">sbResponse</i><i class="p">.</i><i class="v">total</i>
<i class="b1">            }</i>
<i class="b1">        }</i>
<i class="b1">    }</i>
<i class="m">    //Category...</i>
<i class="k">    else if</i><i class="b1">(</i><i class="v">data</i><i class="p">.</i><i class="v">story</i><i class="p">.</i><i class="v">content</i><i class="p">.</i><i class="v">component </i><i class="p">== </i><i class="s">'category'</i><i class="b1">)</i>
<i class="b1">    {</i>
<i class="m">        //Category Blog Archive</i>
<i class="b">        const </i><i class="v">actualCategory </i><i class="p">= </i><i class="v">data</i><i class="p">.</i><i class="v">story</i><i class="p">.</i><i class="v">uuid</i>
<i class="b">        const </i><i class="v">filterCategories </i><i class="p">= </i><i class="b1">[</i><i class="v">actualCategory</i><i class="b1">]</i>

<i class="b">        const </i><i class="v">storyblokApi </i><i class="p">= </i><i class="f">getStoryblokApi</i><i class="b1">()</i><i class="p">;</i>
<i class="b">        const </i><i class="v">sbResponse </i><i class="p">= </i><i class="k">await </i><i class="v">storyblokApi</i><i class="p">.</i><i class="f">get</i><i class="b1">(</i><i class="s">`cdn/stories`</i><i class="p">, </i><i class="b1">{</i>
<i class="v">            version</i><i class="p">: </i><i class="v">process</i><i class="p">.</i><i class="v">env</i><i class="p">.</i><i class="v">NODE_ENV </i><i class="p">== </i><i class="s">"development" </i><i class="p">? </i><i class="s">"draft" </i><i class="p">: </i><i class="s">"published"</i><i class="p">,</i>
<i class="v">            starts_with</i><i class="p">: </i><i class="s">"blog/"</i><i class="p">,</i>
<i class="v">            excluding_fields</i><i class="p">: </i><i class="s">"body"</i><i class="p">,</i>
<i class="v">            is_startpage</i><i class="p">: </i><i class="n">0</i><i class="p">,</i>
<i class="v">            filter_query</i><i class="p">: </i><i class="b1">{</i>
<i class="v">                categories</i><i class="p">: </i><i class="b1">{</i>
<i class="v">                    any_in_array</i><i class="p">: </i><i class="v">filterCategories</i><i class="p">.</i><i class="f">join</i><i class="b1">(</i><i class="s">","</i><i class="b1">)</i>
<i class="b1">                }</i>
<i class="b1">            }</i><i class="p">,</i>
<i class="v">            per_page</i><i class="p">: </i><i class="v">process</i><i class="p">.</i><i class="v">env</i><i class="p">.</i><i class="v">NEXT_PUBLIC_POSTS_PER_PAGE </i><i class="k">as </i><i class="t">unknown </i><i class="k">as </i><i class="t">number</i><i class="p">,</i>
<i class="v">            page</i><i class="p">: </i><i class="n">1</i><i class="p">,</i>
<i class="v">            sort_by</i><i class="p">: </i><i class="s">"first_published_at:desc"</i>
<i class="b1">        })</i><i class="p">;</i>

<i class="v">        extraData</i><i class="p">.</i><i class="v">blogArchive </i><i class="p">= </i><i class="b1">{</i>
<i class="v">            data</i><i class="p">: </i><i class="v">sbResponse</i><i class="p">.</i><i class="v">data</i><i class="p">,</i>
<i class="v">            totalPosts</i><i class="p">: </i><i class="v">sbResponse</i><i class="p">.</i><i class="v">total</i><i class="p">,</i>
<i class="v">            inCategory</i><i class="p">: </i><i class="v">actualCategory</i>
<i class="b1">        }</i>
<i class="b1">    }</i>
<i class="m">    //Posts...</i>
<i class="k">    else if</i><i class="b1">(</i><i class="v">data</i><i class="p">.</i><i class="v">story</i><i class="p">.</i><i class="v">content</i><i class="p">.</i><i class="v">component </i><i class="p">== </i><i class="s">'post'</i><i class="b1">)</i>
<i class="b1">    {</i>
<i class="k">        if</i><i class="b1">(</i><i class="v">data</i><i class="p">.</i><i class="v">story</i><i class="p">.</i><i class="v">content</i><i class="p">.</i><i class="v">categories</i><i class="b1">)</i>
<i class="b1">        {</i>
<i class="b">            const </i><i class="v">filterCategories </i><i class="p">= </i><i class="v">data</i><i class="p">.</i><i class="v">story</i><i class="p">.</i><i class="v">content</i><i class="p">.</i><i class="v">categories</i><i class="p">.</i><i class="f">map</i><i class="b1">((</i><i class="v">cat</i><i class="p">, </i><i class="v">index</i><i class="b1">) </i><i class="p">=</i><i class="g">&gt; </i><i class="b1">{ </i><i class="k">return </i><i class="v">cat</i><i class="p">.</i><i class="v">uuid </i><i class="b1">})</i>
<i class="b">            const </i><i class="v">filterSlug </i><i class="p">= </i><i class="v">data</i><i class="p">.</i><i class="v">story</i><i class="p">.</i><i class="v">full_slug</i>
<i class="b">            const </i><i class="v">storyblokApi </i><i class="p">= </i><i class="f">getStoryblokApi</i><i class="b1">()</i><i class="p">;</i></pre></div>
  <div class="sb"></div>
 </div>
 </div>
 <div class="status">
  <span class="rem"></span>
  <span class="ic" style="left:10.1px"><svg width="14" height="14" viewBox="0 0 16 16" ><path d="M2.9 6.0 L7.6 10 L2.9 14 M13.1 1.9 L8.4 5.5 L13.1 9.1" fill="none" stroke="#fff" stroke-width="1.1"/></svg></span><span class="tx" style="left:27.5px;color:#fff;-webkit-text-stroke:.25px #fff">GitHub</span>
  <span class="ic" style="left:82.7px"><svg width="14" height="14" viewBox="0 0 16 16" ><circle cx="4.5" cy="3.2" r="1.7" fill="none" stroke="#3b3b3b" stroke-width="1"/><circle cx="4.5" cy="12.8" r="1.7" fill="none" stroke="#3b3b3b" stroke-width="1"/><circle cx="11.4" cy="5.6" r="1.7" fill="none" stroke="#3b3b3b" stroke-width="1"/><path d="M4.5 4.9 V11.1 M11.5 7.3 C11.5 9.6 8.6 9.4 6.6 9.8 C5.4 10 4.6 10.4 4.5 11.1" fill="none" stroke="#3b3b3b" stroke-width="1"/></svg></span><span class="tx" style="left:100.7px">main</span><span class="ic" style="left:133.4px"><svg width="14" height="14" viewBox="0 0 16 16" ><path d="M3.32 5.3 A5.4 5.4 0 0 1 13.4 8.4 M12.68 10.7 A5.4 5.4 0 0 1 2.6 7.6" fill="none" stroke="#3b3b3b" stroke-width="1.1"/><path d="M11.2 6.5 L13.4 8.9 L15.6 6.5 M0.4 9.5 L2.6 7.1 L4.8 9.5" fill="none" stroke="#3b3b3b" stroke-width="1.1"/></svg></span>
  <span class="ic" style="left:161.1px"><svg width="14" height="14" viewBox="0 0 16 16" ><circle cx="8" cy="8" r="6.5" fill="none" stroke="#3b3b3b" stroke-width="1"/><path d="M5.4 5.4 L10.6 10.6 M10.6 5.4 L5.4 10.6" stroke="#3b3b3b" stroke-width="1"/></svg></span><span class="tx" style="left:178.6px">0</span><span class="ic" style="left:190px"><svg width="14" height="14" viewBox="0 0 16 16" ><path d="M8 1.8 L14.6 13.8 H1.4 Z" fill="none" stroke="#3b3b3b" stroke-width="1" stroke-linejoin="round"/><path d="M8 6 V10" stroke="#3b3b3b" stroke-width="1.1"/><circle cx="8" cy="11.8" r="0.7" fill="#3b3b3b"/></svg></span><span class="tx" style="left:207.6px">0</span>
  <span class="tx" style="left:645.6px">Riga 1, colonna 1</span>
  <span class="tx" style="left:759.4px;letter-spacing:.34px">Dimensione tabulazione: 4</span>
  <span class="tx" style="left:924.6px;letter-spacing:.68px">UTF-8</span>
  <span class="tx" style="left:978px">LF</span>
  <span class="ic" style="left:1005.5px"><svg width="14" height="14" viewBox="0 0 16 16" ><path d="M5.4 2.2 C3.6 2.2 3.8 3.6 3.8 5 C3.8 6.4 3.4 7 2.2 7.2 C3.4 7.4 3.8 8 3.8 9.4 C3.8 10.8 3.6 12.2 5.4 12.2 M9.6 2.2 C11.4 2.2 11.2 3.6 11.2 5 C11.2 6 11.4 6.6 12 7" fill="none" stroke="#3b3b3b" stroke-width="1"/><circle cx="11.4" cy="11" r="2.6" fill="#3b3b3b"/></svg></span><span class="tx" style="left:1025.8px">TypeScript JSX</span>
  <span class="tx" style="left:1125.8px">Layout: Italian</span>
  <span class="ic" style="left:1221px"><svg width="14" height="14" viewBox="0 0 16 16" ><circle cx="5.6" cy="6.6" r="2.6" fill="none" stroke="#3b3b3b" stroke-width="1"/><path d="M1.2 14.6 C1.6 11.4 3.4 10 5.6 10 C6.8 10 7.8 10.4 8.6 11.2" fill="none" stroke="#3b3b3b" stroke-width="1"/><path d="M5.6 2.4 V1.4 H14.6 V7.6 H12.2 L10.4 9.4 V7.6 H9.6" fill="none" stroke="#3b3b3b" stroke-width="1"/></svg></span>
  <span class="ic" style="left:1251px"><svg width="14" height="14" viewBox="0 0 16 16" ><path d="M3 11.6 C4 10.6 4 9 4 7 C4 4.2 5.6 2 8 2 C10.4 2 12 4.2 12 7 C12 9 12 10.6 13 11.6 Z" fill="none" stroke="#3b3b3b" stroke-width="1" stroke-linejoin="round"/><path d="M6.6 11.8 C6.6 13.6 9.4 13.6 9.4 11.8" fill="none" stroke="#3b3b3b" stroke-width="1"/></svg></span>
 </div>
</div>
</body></html>
